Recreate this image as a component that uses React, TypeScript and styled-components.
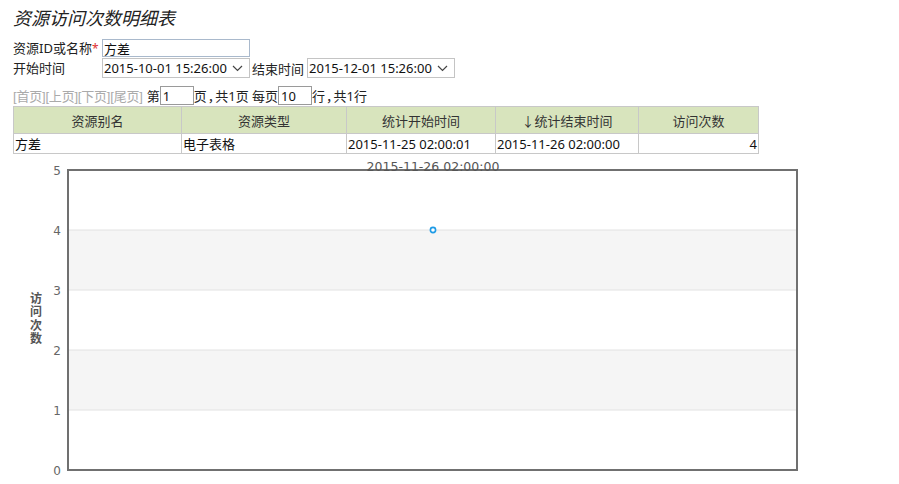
import styled, { createGlobalStyle } from "styled-components";

const GlobalStyle = createGlobalStyle`
  body {
    margin: 0;
    background: #ffffff;
    font-family: "Noto Sans", "Noto Sans CJK SC", sans-serif;
    font-size: 13px;
    color: #222;
  }
`;

const columns = [
  { title: "资源别名", width: 168 },
  { title: "资源类型", width: 165 },
  { title: "统计开始时间", width: 149 },
  { title: "↓统计结束时间", width: 143 },
  { title: "访问次数", width: 120 },
];

const rows = [["方差", "电子表格", "2015-11-25 02:00:01", "2015-11-26 02:00:00", "4"]];

const chartFont = "'DejaVu Sans', 'Liberation Sans', sans-serif";

const Chevron = () => (
  <svg width="11" height="7" viewBox="0 0 11 7">
    <path d="M1 1l4.5 4.5L10 1" fill="none" stroke="#444" strokeWidth="1.2" />
  </svg>
);

const DateSelect = ({ value }: { value: string }) => (
  <SelectWrap>
    <Select defaultValue={value}>
      <option>{value}</option>
    </Select>
    <Arrow>
      <Chevron />
    </Arrow>
  </SelectWrap>
);

const Chart = () => {
  const left = 55;
  const right = 784;
  const top = 14;
  const step = 60;
  const ticks = [5, 4, 3, 2, 1, 0];

  return (
    <svg width="886" height="329" viewBox="0 0 886 329">
      <rect x={left} y={top + step} width={right - left} height={step} fill="#f5f5f5" />
      <rect x={left} y={top + step * 3} width={right - left} height={step} fill="#f5f5f5" />
      {ticks.map((t, i) => (
        <g key={t}>
          {i > 0 && i < 5 && (
            <line x1={left} x2={right} y1={top + i * step} y2={top + i * step} stroke="#e2e2e2" />
          )}
          <text
            x={left - 7}
            y={top + i * step + 4.5}
            textAnchor="end"
            fontSize="12"
            fill="#666"
            fontFamily={chartFont}
          >
            {t}
          </text>
        </g>
      ))}
      <rect x={left} y={top} width={right - left} height={step * 5} fill="none" stroke="#707070" strokeWidth="2" />
      <text x={420} y={top + 0.5} textAnchor="middle" fontSize="12.5" fill="#555" fontFamily={chartFont}>
        2015-11-26 02:00:00
      </text>
      <text
        x={23}
        y={136}
        fontSize="12"
        fontWeight="bold"
        fill="#555"
        letterSpacing="1.5"
        fontFamily="'Noto Sans CJK SC', sans-serif"
        style={{ writingMode: "vertical-rl" }}
      >
        访问次数
      </text>
      <circle cx={420} cy={top + step} r="2.6" fill="#fff" stroke="#1e9be6" strokeWidth="1.6" />
    </svg>
  );
};

const App = () => {
  return (
    <Page>
      <GlobalStyle />
      <Title>资源访问次数明细表</Title>
      <FormRow>
        <Label>
          资源ID或名称<Star>*</Star>
        </Label>
        <TextInput defaultValue="方差" />
      </FormRow>
      <FormRow>
        <Label>开始时间</Label>
        <DateSelect value="2015-10-01 15:26:00" />
        <InlineLabel>结束时间</InlineLabel>
        <DateSelect value="2015-12-01 15:26:00" />
      </FormRow>
      <Pager>
        <PagerLinks>[首页][上页][下页][尾页]</PagerLinks>
        <PagerText>第</PagerText>
        <PageInput defaultValue="1" />
        <PagerText>页<Comma>，</Comma>共1页 每页</PagerText>
        <PageInput defaultValue="10" />
        <PagerText>行<Comma>，</Comma>共1行</PagerText>
      </Pager>
      <Table>
        <colgroup>
          {columns.map((c) => (
            <col key={c.title} style={{ width: c.width }} />
          ))}
        </colgroup>
        <thead>
          <tr>
            {columns.map((c) => (
              <Th key={c.title}>{c.title}</Th>
            ))}
          </tr>
        </thead>
        <tbody>
          {rows.map((r, i) => (
            <tr key={i}>
              {r.map((v, j) => (
                <Td key={j} $right={j === r.length - 1}>
                  {v}
                </Td>
              ))}
            </tr>
          ))}
        </tbody>
      </Table>
      <ChartBox>
        <Chart />
      </ChartBox>
    </Page>
  );
};

const Page = styled.div`
  padding: 8px 0 0 13px;
`;

const Title = styled.h1`
  margin: 0 0 9px;
  font-size: 18px;
  font-weight: normal;
  font-style: italic;
  line-height: 21px;
  color: #222;
`;

const FormRow = styled.div`
  display: flex;
  align-items: center;
  height: 20px;
`;

const Label = styled.span`
  width: 89px;
  line-height: 20px;
`;

const Star = styled.span`
  color: #e03030;
  font-size: 12px;
`;

const InlineLabel = styled.span`
  margin: 0 3px 0 2px;
`;

const TextInput = styled.input`
  box-sizing: border-box;
  width: 148px;
  height: 18px;
  margin: 0;
  padding: 0 1px;
  border: 1px solid #a9b9cc;
  font: inherit;
  font-size: 13px;
  color: #111;
  outline: none;
`;

const SelectWrap = styled.div`
  position: relative;
  width: 148px;
  height: 20px;
`;

const Select = styled.select`
  appearance: none;
  box-sizing: border-box;
  width: 100%;
  height: 100%;
  margin: 0;
  padding: 0 0 0 1px;
  border: 1px solid #c4c4c4;
  border-radius: 0;
  background: #fff;
  font: inherit;
  font-size: 13px;
  color: #111;
  outline: none;
`;

const Arrow = styled.span`
  position: absolute;
  right: 7px;
  top: 7px;
  display: flex;
  pointer-events: none;
`;

const Pager = styled.div`
  display: flex;
  align-items: center;
  height: 21px;
  margin-top: 7px;
  color: #222;
`;

const PagerLinks = styled.span`
  font-family: "Liberation Sans", "Noto Sans CJK SC", sans-serif;
  letter-spacing: -0.2px;
  color: #aaaaaa;
  margin-right: 4px;
`;

const PagerText = styled.span`
  font-feature-settings: "halt";
`;

const Comma = styled.span`
  padding: 0 1px;
`;

const PageInput = styled.input`
  box-sizing: border-box;
  width: 34px;
  height: 19px;
  margin: 0;
  padding: 0 2px;
  border: 1px solid #9a9a9a;
  font: inherit;
  font-size: 13px;
  color: #111;
  outline: none;
`;

const Table = styled.table`
  border-collapse: collapse;
  table-layout: fixed;
  width: 745px;
  margin-top: 0;
`;

const Th = styled.th`
  height: 26px;
  padding: 0;
  border: 1px solid #c8c8c8;
  background: #d8e4bd;
  font-weight: normal;
  color: #333;
  text-align: center;
`;

const Td = styled.td<{ $right?: boolean }>`
  height: 19px;
  padding: 0 1px;
  border: 1px solid #c8c8c8;
  text-align: ${(p) => (p.$right ? "right" : "left")};
  white-space: nowrap;
  color: #111;
`;

const ChartBox = styled.div`
  margin-top: 2px;
  line-height: 0;
`;

export default App;
